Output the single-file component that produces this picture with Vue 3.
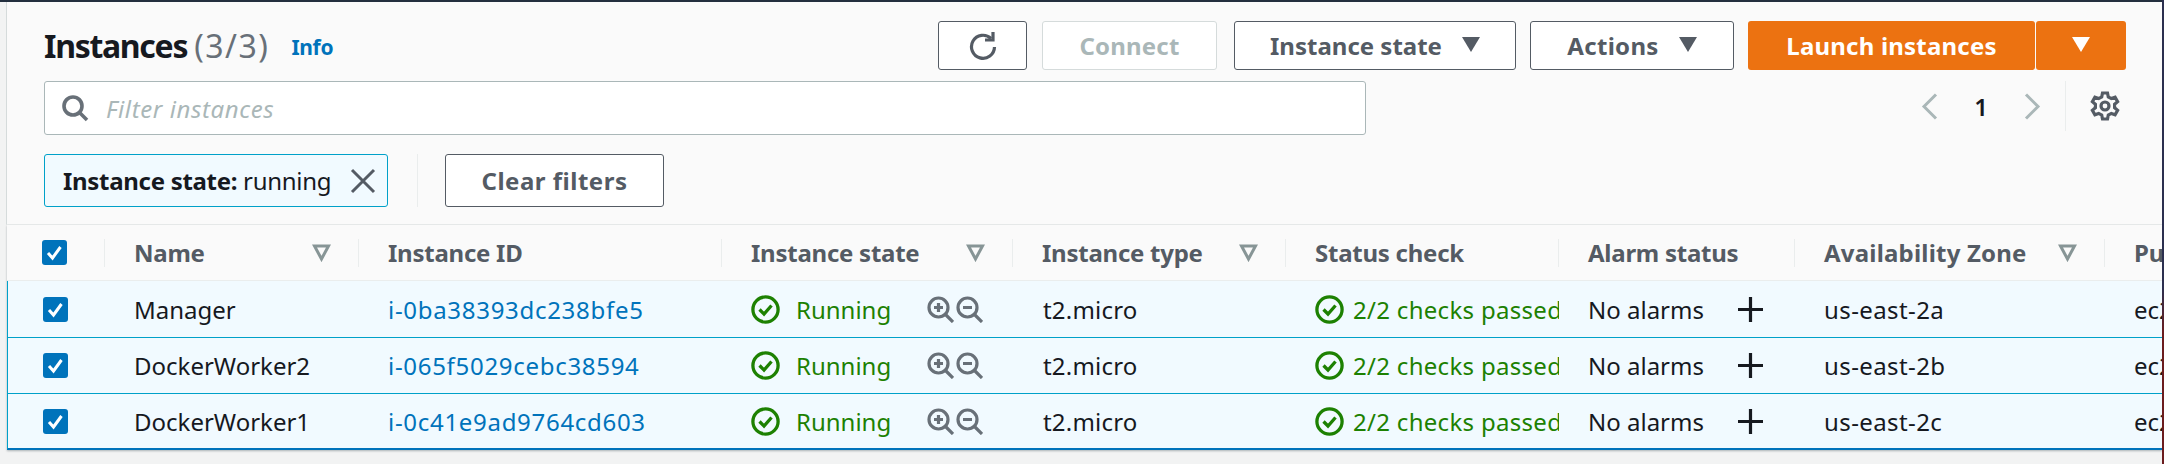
<script setup>
const columns = [
  { label: 'Name', sort: true },
  { label: 'Instance ID' },
  { label: 'Instance state', sort: true },
  { label: 'Instance type', sort: true },
  { label: 'Status check' },
  { label: 'Alarm status' },
  { label: 'Availability Zone', sort: true, wide: true },
  { label: 'Public IPv4 DNS', last: true },
]

const rows = [
  { name: 'Manager', id: 'i-0ba38393dc238bfe5', zone: 'us-east-2a' },
  { name: 'DockerWorker2', id: 'i-065f5029cebc38594', zone: 'us-east-2b' },
  { name: 'DockerWorker1', id: 'i-0c41e9ad9764cd603', zone: 'us-east-2c' },
]
</script>

<template>
  <div class="page">
    <div class="content">
      <div class="panel">
        <div class="toolbar">
          <h1 class="title">Instances <span class="count">(3/3)</span></h1>
          <a class="info">Info</a>
          <div class="actions">
            <button class="btn refresh" aria-label="Refresh">
              <svg width="30" height="30" viewBox="0 0 30 30" fill="none" stroke="#545b64" stroke-width="3.2">
                <path d="M23 7.500A11.500 11.500 0 1 0 26.500 16" />
                <path d="M25 1v8h-8" />
              </svg>
            </button>
            <button class="btn connect" disabled>Connect</button>
            <button class="btn state">Instance state<span class="caret"></span></button>
            <button class="btn menu">Actions<span class="caret"></span></button>
            <div class="launch">
              <button class="primary main">Launch instances</button>
              <button class="primary more" aria-label="More"><span class="caret white"></span></button>
            </div>
          </div>
        </div>

        <div class="filter-row">
          <div class="search">
            <svg width="28" height="28" viewBox="0 0 28 28" fill="none" stroke="#687078" stroke-width="3.6">
              <circle cx="12" cy="12" r="9" />
              <path d="M18.500 18.500L26 26" />
            </svg>
            <span class="placeholder">Filter instances</span>
          </div>
          <div class="pager">
            <svg width="17" height="27" viewBox="0 0 17 27" fill="none" stroke="#aab7b8" stroke-width="3"><path d="M15 1.500L3 13.500l12 12" /></svg>
            <span class="page-no">1</span>
            <svg width="17" height="27" viewBox="0 0 17 27" fill="none" stroke="#aab7b8" stroke-width="3"><path d="M2 1.500l12 12-12 12" /></svg>
            <span class="pager-sep"></span>
            <svg width="30" height="30" viewBox="0 0 30 30" fill="none" stroke="#545b64" stroke-width="3.2">
              <circle cx="15" cy="15" r="4" />
              <path d="M12.500 2h5l.8 4 3 1.600 3.800-1.400 2.500 4.400-3 2.600v3.600l3 2.600-2.500 4.400-3.800-1.400-3 1.600-.8 4h-5l-.8-4-3-1.600-3.800 1.400-2.500-4.400 3-2.600v-3.600l-3-2.600 2.500-4.400 3.800 1.400 3-1.600z" />
            </svg>
          </div>
        </div>

        <div class="chips">
          <div class="chip">
            <span><b>Instance state:</b> running</span>
            <svg width="26" height="26" viewBox="0 0 26 26" fill="none" stroke="#545b64" stroke-width="3"><path d="M2 2l22 22M24 2L2 24" /></svg>
          </div>
          <span class="chip-sep"></span>
          <button class="btn clear">Clear filters</button>
        </div>
      </div>

      <div class="table">
        <div class="grid head">
          <div class="cell check-cell"><span class="head-inner"><span class="box"><svg width="25" height="25" viewBox="0 0 25 25" fill="none" stroke="#fff" stroke-width="3"><path d="M6 13l4.500 5 8-11" /></svg></span></span></div>
          <div v-for="col in columns" :key="col.label" class="cell">
            <span class="head-inner" :class="{ last: col.last }">
              <span class="label" :class="{ wide: col.wide }">{{ col.label }}</span>
              <svg v-if="col.sort" class="sort" width="19" height="18" viewBox="0 0 19 18" fill="none" stroke="#879596" stroke-width="3"><path d="M2.500 2h14L9.500 15z" /></svg>
            </span>
          </div>
        </div>

        <div v-for="row in rows" :key="row.id" class="grid row">
          <div class="cell check-cell"><span class="box"><svg width="25" height="25" viewBox="0 0 25 25" fill="none" stroke="#fff" stroke-width="3"><path d="M6 13l4.500 5 8-11" /></svg></span></div>
          <div class="cell">{{ row.name }}</div>
          <div class="cell link">{{ row.id }}</div>
          <div class="cell">
            <svg class="ok" width="29" height="29" viewBox="0 0 29 29" fill="none" stroke="#1d8102" stroke-width="3.3"><circle cx="14.500" cy="14.500" r="12.600" /><path d="M8.500 14.500l4.500 4.500 7.500-8.500" /></svg>
            <span class="green state-text">Running</span>
            <span class="zooms">
              <svg width="27" height="27" viewBox="0 0 27 27" fill="none" stroke="#687078" stroke-width="3.2"><circle cx="11.500" cy="11.500" r="9.500" /><path d="M18.500 18.500L26 26M11.500 7v9M7 11.500h9" /></svg>
              <svg width="27" height="27" viewBox="0 0 27 27" fill="none" stroke="#687078" stroke-width="3.2"><circle cx="11.500" cy="11.500" r="9.500" /><path d="M18.500 18.500L26 26M7 11.500h9" /></svg>
            </span>
          </div>
          <div class="cell micro">t2.micro</div>
          <div class="cell">
            <svg class="ok" width="29" height="29" viewBox="0 0 29 29" fill="none" stroke="#1d8102" stroke-width="3.3"><circle cx="14.500" cy="14.500" r="12.600" /><path d="M8.500 14.500l4.500 4.500 7.500-8.500" /></svg>
            <span class="green status-text">2/2 checks passed</span>
          </div>
          <div class="cell">
            <span>No alarms</span>
            <svg class="plus" width="27" height="27" viewBox="0 0 27 27" fill="none" stroke="#16191f" stroke-width="3.2"><path d="M13.500 1v25M1 13.500h25" /></svg>
          </div>
          <div class="cell zone">{{ row.zone }}</div>
          <div class="cell">ec2-3-16-1-1.us-east-2.compute.amazonaws.com</div>
        </div>
      </div>
    </div>
    <div class="edge"></div>
  </div>
</template>

<style>
html, body {
  margin: 0;
  background: #f2f3f3;
}
</style>

<style scoped>
.page {
  width: 2164px;
  height: 464px;
  display: flex;
  overflow: hidden;
  background: #f2f3f3;
  font-family: "Noto Sans", "Open Sans", sans-serif;
  color: #16191f;
}

.content {
  flex: 1;
  min-width: 0;
  box-sizing: border-box;
  border-top: 2px solid #232f3e;
  padding-left: 6px;
}

.edge {
  width: 2px;
  background: linear-gradient(#2b2f4f 0, #2b2f4f 62%, #6b1c1e 72%);
}

.panel {
  height: 223px;
  box-sizing: border-box;
  padding: 19px 36px 0 37px;
  background: #fafafa;
  border-left: 1px solid #d5dbdb;
  border-bottom: 1px solid #eaeded;
}

.toolbar {
  display: flex;
  align-items: center;
  height: 49px;
}

.title {
  margin: 0;
  font-size: 32px;
  font-weight: 700;
  letter-spacing: -1.3px;
}

.count {
  font-weight: 400;
  letter-spacing: 1.5px;
  color: #687078;
}

.info {
  margin-left: 22px;
  margin-top: 3px;
  font-size: 21px;
  font-weight: 700;
  letter-spacing: -0.3px;
  color: #0073bb;
}

.actions {
  display: flex;
  margin-left: auto;
}

.btn {
  height: 49px;
  box-sizing: border-box;
  background: #fff;
  border: 1px solid #545b64;
  border-radius: 3px;
  color: #545b64;
  font: 700 24px "Noto Sans", sans-serif;
  letter-spacing: 0.2px;
  padding: 0;
}

.refresh {
  width: 89px;
  display: flex;
  align-items: center;
  justify-content: center;
}

.connect {
  width: 175px;
  margin-left: 15px;
  color: #aab7b8;
  border-color: #d5dbdb;
}

.state {
  width: 282px;
  margin-left: 17px;
  letter-spacing: 0;
}

.menu {
  width: 204px;
  margin-left: 14px;
  letter-spacing: 0.3px;
}

.caret {
  display: inline-block;
  width: 0;
  height: 0;
  margin-left: 20px;
  vertical-align: 3px;
  border-left: 9px solid transparent;
  border-right: 9px solid transparent;
  border-top: 15px solid #545b64;
}

.caret.white {
  margin-left: 0;
  border-top-color: #fff;
}

.launch {
  display: flex;
  gap: 1px;
  margin-left: 14px;
}

.primary {
  height: 49px;
  background: #ec7211;
  border: none;
  border-radius: 3px;
  color: #fff;
  font: 700 24px "Noto Sans", sans-serif;
  letter-spacing: 0.2px;
  padding: 0;
}

.main {
  width: 287px;
}

.more {
  width: 90px;
}

.filter-row {
  display: flex;
  margin-top: 11px;
}

.search {
  width: 1322px;
  height: 54px;
  box-sizing: border-box;
  display: flex;
  align-items: center;
  gap: 17px;
  padding-left: 16px;
  background: #fff;
  border: 1px solid #aab7b8;
  border-radius: 3px;
}

.placeholder {
  font-size: 24px;
  font-style: italic;
  letter-spacing: 0.6px;
  color: #aab7b8;
}

.pager {
  display: flex;
  align-items: center;
  height: 50px;
  margin-left: 555px;
}

.page-no {
  width: 86px;
  text-align: center;
  font-size: 24px;
  font-weight: 600;
}

.pager-sep {
  width: 1px;
  height: 50px;
  margin: 0 24px 0 24px;
  background: #eaeded;
}

.chips {
  display: flex;
  align-items: stretch;
  height: 53px;
  margin-top: 19px;
}

.chip {
  width: 344px;
  box-sizing: border-box;
  display: flex;
  align-items: center;
  justify-content: space-between;
  padding: 0 11px 0 18px;
  background: #f1faff;
  border: 1px solid #00a1c9;
  border-radius: 3px;
  font-size: 24px;
  letter-spacing: -0.3px;
}

.chip-sep {
  width: 1px;
  margin: 0 27px 0 29px;
  background: #eaeded;
}

.clear {
  width: 219px;
  height: 53px;
  letter-spacing: 0.5px;
}

.table {
  background: #fafafa;
  margin-left: 1px;
  box-shadow: 0 1px 2px rgba(0, 28, 36, 0.3);
  font-size: 24px;
}

.grid {
  display: grid;
  grid-template-columns: 98px 254px 363px 291px 273px 273px 236px 310px 1fr;
}

.head {
  height: 56px;
  align-items: center;
  font-weight: 700;
  color: #545b64;
  letter-spacing: -0.25px;
  border-bottom: 1px solid #eaeded;
  box-sizing: border-box;
}

.head-inner {
  display: flex;
  align-items: center;
  justify-content: space-between;
  height: 28px;
  padding-right: 27px;
  border-right: 1px solid #eaeded;
}

.head-inner.last {
  border-right: none;
}

.label {
  line-height: 28px;
}

.label.wide {
  letter-spacing: 0.2px;
}

.cell {
  min-width: 0;
  padding-left: 29px;
  white-space: nowrap;
  overflow: hidden;
  display: flex;
  align-items: center;
}

.head .cell {
  display: block;
  overflow: visible;
}

.row {
  height: 56px;
  box-sizing: border-box;
  grid-template-columns: 97px 254px 363px 291px 273px 273px 236px 310px 1fr;
  background: #f1faff;
  border-top: 1px solid #00a1c9;
  border-left: 1px solid #00a1c9;
}

.head + .row {
  border-top: none;
}

.row:last-child {
  height: 57px;
  border-bottom: 2px solid #0073bb;
}

.check-cell {
  padding-left: 35px;
}

.box {
  width: 25px;
  height: 25px;
  flex: none;
  display: block;
  background: #0073bb;
  border-radius: 3px;
}

.box svg {
  display: block;
}

.link {
  color: #0073bb;
  letter-spacing: 0.7px;
}

.micro {
  padding-left: 30px;
  letter-spacing: 0.2px;
}

.zone {
  letter-spacing: 0.4px;
}

.green {
  color: #1d8102;
}

.ok {
  flex: none;
}

.state-text {
  margin-left: 16px;
}

.zooms {
  display: flex;
  gap: 2px;
  margin-left: 36px;
}

.status-text {
  margin-left: 9px;
  letter-spacing: 0.3px;
}

.plus {
  flex: none;
  margin-left: 33px;
}
</style>
